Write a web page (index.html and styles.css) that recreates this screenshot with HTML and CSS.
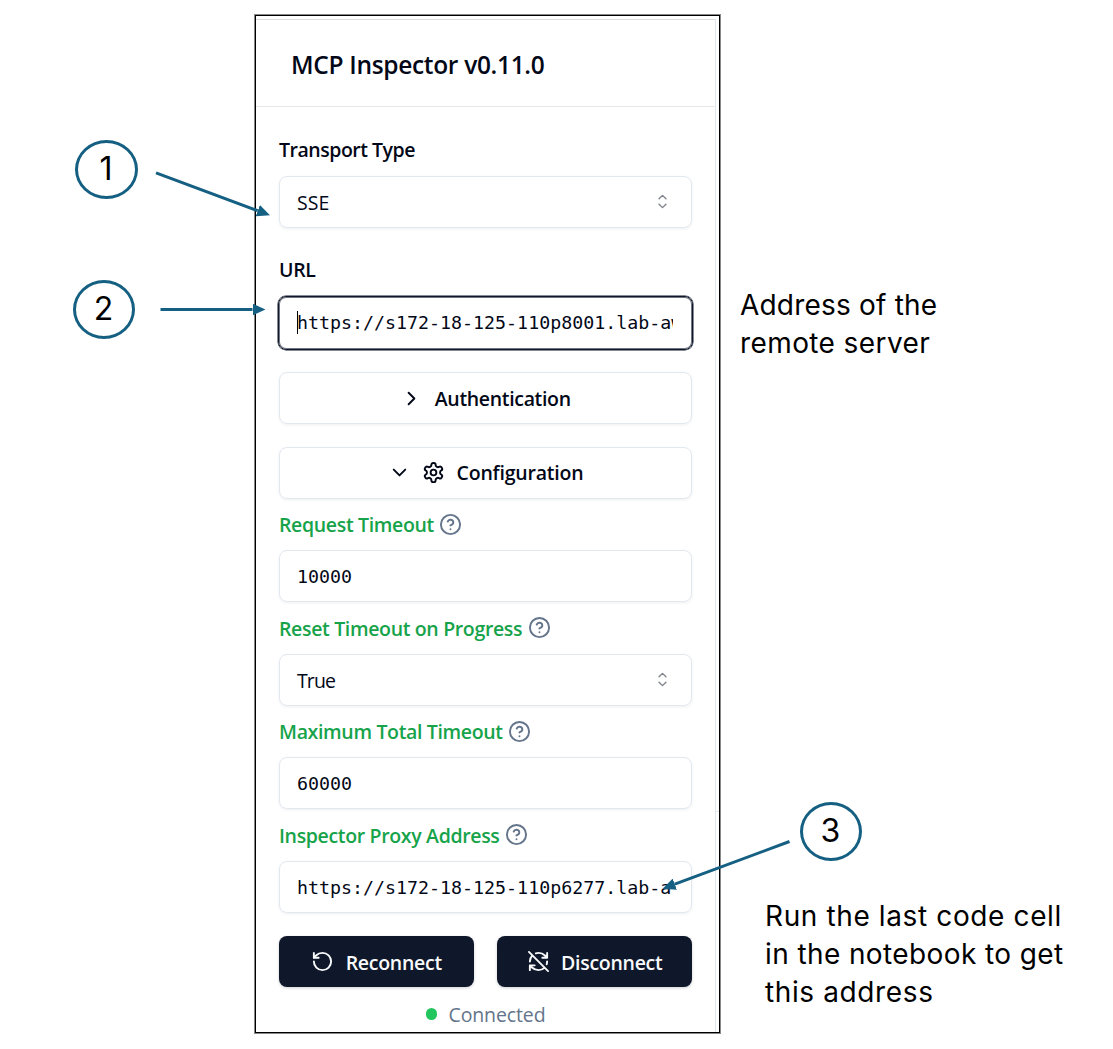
FILE: index.html
```html
<!DOCTYPE html>
<html lang="en">
<head>
<meta charset="utf-8">
<title>MCP Inspector</title>
<link rel="stylesheet" href="styles.css">
</head>
<body>
<svg class="defs" width="0" height="0">
  <symbol id="help" viewBox="0 0 24 24"><circle cx="12" cy="12" r="10"/><path d="M9.09 9a3 3 0 0 1 5.83 1c0 2-3 3-3 3"/><path d="M12 17h.01"/></symbol>
  <symbol id="sort" viewBox="0 0 15 15"><path d="M5.25 5.75 7.5 3.5l2.25 2.25M5.25 9.25 7.5 11.5l2.25-2.25"/></symbol>
</svg>
<main class="panel">
  <header class="head"><h1 class="title">MCP Inspector v0.11.0</h1></header>
  <div class="content">
    <label class="label transport"><span>Transport Type</span></label>
    <div class="field select"><span>SSE</span><svg class="icon sort"><use href="#sort"/></svg></div>
    <label class="label url"><span>URL</span></label>
    <div class="field mono focus"><i class="caret"></i><span class="clip">https://s172-18-125-110p8001.lab-aw</span></div>
    <div class="field button auth">
      <svg class="icon" viewBox="0 0 24 24"><path d="m9 18 6-6-6-6"/></svg><span>Authentication</span>
    </div>
    <div class="field button conf">
      <svg class="icon" viewBox="0 0 24 24"><path d="m6 9 6 6 6-6"/></svg>
      <svg class="icon" viewBox="0 0 24 24"><path d="M12.22 2h-.44a2 2 0 0 0-2 2v.18a2 2 0 0 1-1 1.73l-.43.25a2 2 0 0 1-2 0l-.15-.08a2 2 0 0 0-2.73.73l-.22.38a2 2 0 0 0 .73 2.73l.15.1a2 2 0 0 1 1 1.72v.51a2 2 0 0 1-1 1.74l-.15.09a2 2 0 0 0-.73 2.73l.22.38a2 2 0 0 0 2.73.73l.15-.08a2 2 0 0 1 2 0l.43.25a2 2 0 0 1 1 1.73V20a2 2 0 0 0 2 2h.44a2 2 0 0 0 2-2v-.18a2 2 0 0 1 1-1.73l.43-.25a2 2 0 0 1 2 0l.15.08a2 2 0 0 0 2.73-.73l.22-.39a2 2 0 0 0-.73-2.73l-.15-.08a2 2 0 0 1-1-1.74v-.5a2 2 0 0 1 1-1.74l.15-.09a2 2 0 0 0 .73-2.73l-.22-.38a2 2 0 0 0-2.73-.73l-.15.08a2 2 0 0 1-2 0l-.43-.25a2 2 0 0 1-1-1.73V4a2 2 0 0 0-2-2z"/><circle cx="12" cy="12" r="3"/></svg><span class="conf-text">Configuration</span>
    </div>
    <label class="label green l1"><span>Request Timeout</span><svg class="icon help"><use href="#help"/></svg></label>
    <div class="field mono"><span>10000</span></div>
    <label class="label green l2"><span>Reset Timeout on Progress</span><svg class="icon help"><use href="#help"/></svg></label>
    <div class="field select"><span class="true">True</span><svg class="icon sort"><use href="#sort"/></svg></div>
    <label class="label green l3"><span>Maximum Total Timeout</span><svg class="icon help"><use href="#help"/></svg></label>
    <div class="field mono"><span>60000</span></div>
    <label class="label green l4"><span>Inspector Proxy Address</span><svg class="icon help"><use href="#help"/></svg></label>
    <div class="field mono"><span>https://s172-18-125-110p6277.lab-a</span></div>
    <div class="actions">
      <div class="action"><svg class="icon" viewBox="0 0 24 24"><path d="M3 12a9 9 0 1 0 9-9 9.75 9.75 0 0 0-6.74 2.74L3 8"/><path d="M3 3v5h5"/></svg><span>Reconnect</span></div>
      <div class="action"><svg class="icon" viewBox="0 0 24 24"><path d="M21 8l-2.26-2.26A9.75 9.75 0 0 0 12 3c-1 0-1.97.16-2.87.47M8 16H3v5M3 12c0-2.49 1-4.74 2.64-6.36M3 16l2.26 2.26A9.75 9.75 0 0 0 12 21c2.49 0 4.74-1 6.36-2.64M21 12c0 1-.16 1.97-.47 2.87M21 3v5h-5M22 22 2 2"/></svg><span>Disconnect</span></div>
    </div>
    <div class="status"><i class="dot"></i><span>Connected</span></div>
  </div>
</main>
<svg class="arrows" width="1113" height="1049">
  <defs><marker id="tip" markerUnits="userSpaceOnUse" markerWidth="13" markerHeight="12" refX="0" refY="6" orient="auto"><path d="M0 0 13 6 0 12z"/></marker></defs>
  <path d="M156 172.800 257.800 210.700" marker-end="url(#tip)"/>
  <path d="M160.500 309.500H252.500" marker-end="url(#tip)"/>
  <path d="M789.500 841.500 674.800 884.200" marker-end="url(#tip)"/>
</svg>
<div class="step s1">1</div>
<div class="step s2">2</div>
<div class="step s3">3</div>
<p class="note n1">Address of the<br><span class="wide">remote server</span></p>
<p class="note n2"><span class="wider">Run the last code cell</span><br><span class="wide">in the notebook to get</span><br><span class="wider">this address</span></p>
</body>
</html>
```
FILE: styles.css
```css
* { box-sizing: border-box; }
body { margin: 0; width: 1113px; height: 1049px; overflow: hidden; position: relative; background: #fff; color: #020817; font-family: "Open Sans", sans-serif; font-size: 19.5px; }
.defs { position: absolute; }
.panel { position: relative; width: 465px; height: 1018px; margin: 15px 0 0 255px; border: 1px solid #000; box-shadow: 0 0 0 1px #888; padding-top: 3px; }
.panel::before { content: ""; position: absolute; right: 3px; top: 3px; bottom: 0; width: 1px; background: #e2e8f0; }
.panel::after { content: ""; position: absolute; right: 0; top: 795px; width: 4px; height: 1px; background: #e2e8f0; }
.head { height: 88px; border-top: 1px solid #ddd; border-bottom: 1px solid #e5e7eb; padding-left: 35px; display: flex; align-items: center; margin-right: 4px; }
.title { margin: 0; font-size: 24.5px; font-weight: 600; line-height: 34px; padding-top: 4px; letter-spacing: -.32px; }
.content { padding: 29px 0 0 23px; width: 436px; display: flex; flex-direction: column; }
.label { display: flex; align-items: center; font-weight: 600; line-height: 28px; height: 28px; letter-spacing: -.34px; }
.transport { letter-spacing: -.48px; }
.green { color: #16a34a; }
.l2 span, .l4 span { padding-top: 1px; }
.icon { width: 23px; height: 23px; flex: none; fill: none; stroke: currentColor; stroke-width: 2; stroke-linecap: round; stroke-linejoin: round; }
.help { color: #64748b; margin-left: 5.500px; margin-top: -2px; }
.sort { stroke-width: .9; opacity: .5; margin-top: -1px; }
.field { height: 52px; border: 1px solid #e2e8f0; border-radius: 8px; box-shadow: 0 1px 3px rgba(15,23,42,.07); padding: 0 17px; display: flex; align-items: center; white-space: nowrap; position: relative; }
.select { justify-content: space-between; }
.true { letter-spacing: -.9px; }
.mono { font-family: "DejaVu Sans Mono", monospace; font-size: 18.3px; }
.clip { overflow: hidden; width: 376px; flex: none; }
.button { justify-content: center; gap: 11.5px; font-weight: 600; letter-spacing: -.33px; }
.conf-text { letter-spacing: -.2px; }
.focus { border: 1px solid #0f172a; height: 54px; margin: 0 -1px; padding: 0 18px 2px; box-shadow: 0 0 0 .5px #0f172a, inset 0 0 0 1px rgba(15,23,42,.6); }
.caret { position: absolute; left: 18px; top: 14px; width: 1px; height: 23px; background: #000; }
.transport { margin-bottom: 12px; }
.url { margin: 28px 0 12px; }
.auth { margin-top: 22px; }
.conf { margin-top: 23px; padding-bottom: 1px; }
.l1 { margin: 12px 0 11px; }
.l2, .l3, .l4 { margin: 12px 0 12px; }
.l3 { margin-bottom: 11px; }
.actions { display: flex; gap: 23px; margin-top: 23px; }
.action { flex: 1; height: 51px; border-radius: 8px; background: #0f172a; color: #f8fafc; display: flex; align-items: center; justify-content: center; gap: 11.5px; font-weight: 600; letter-spacing: -.28px; box-shadow: 0 1px 3px rgba(15,23,42,.2); }
.action span { padding-top: 1px; }
.status { display: flex; align-items: center; justify-content: center; gap: 11.5px; height: 28px; margin-top: 13px; color: #64748b; letter-spacing: -.12px; }
.dot { width: 11.5px; height: 11.5px; border-radius: 50%; background: #22c55e; }
.arrows { position: absolute; left: 0; top: 0; fill: none; stroke: #156082; stroke-width: 3; }
.arrows marker path { fill: #156082; stroke: none; }
.step { position: absolute; width: 62px; height: 59px; border: 3px solid #156082; border-radius: 50%; display: flex; align-items: center; justify-content: center; padding: 0 1px 2px 0; font-family: Inter, sans-serif; font-size: 32px; color: #000; }
.s1 { left: 75px; top: 140px; width: 63px; }
.s2 { left: 73px; top: 280px; }
.s3 { left: 800px; top: 802px; }
.note { position: absolute; margin: 0; font-family: Inter, sans-serif; font-size: 28px; line-height: 38px; letter-spacing: .2px; color: #000; white-space: nowrap; }
.wide { letter-spacing: .4px; }
.wider { letter-spacing: .62px; }
.n1 { left: 740px; top: 286px; }
.n2 { left: 765px; top: 897px; }
```
